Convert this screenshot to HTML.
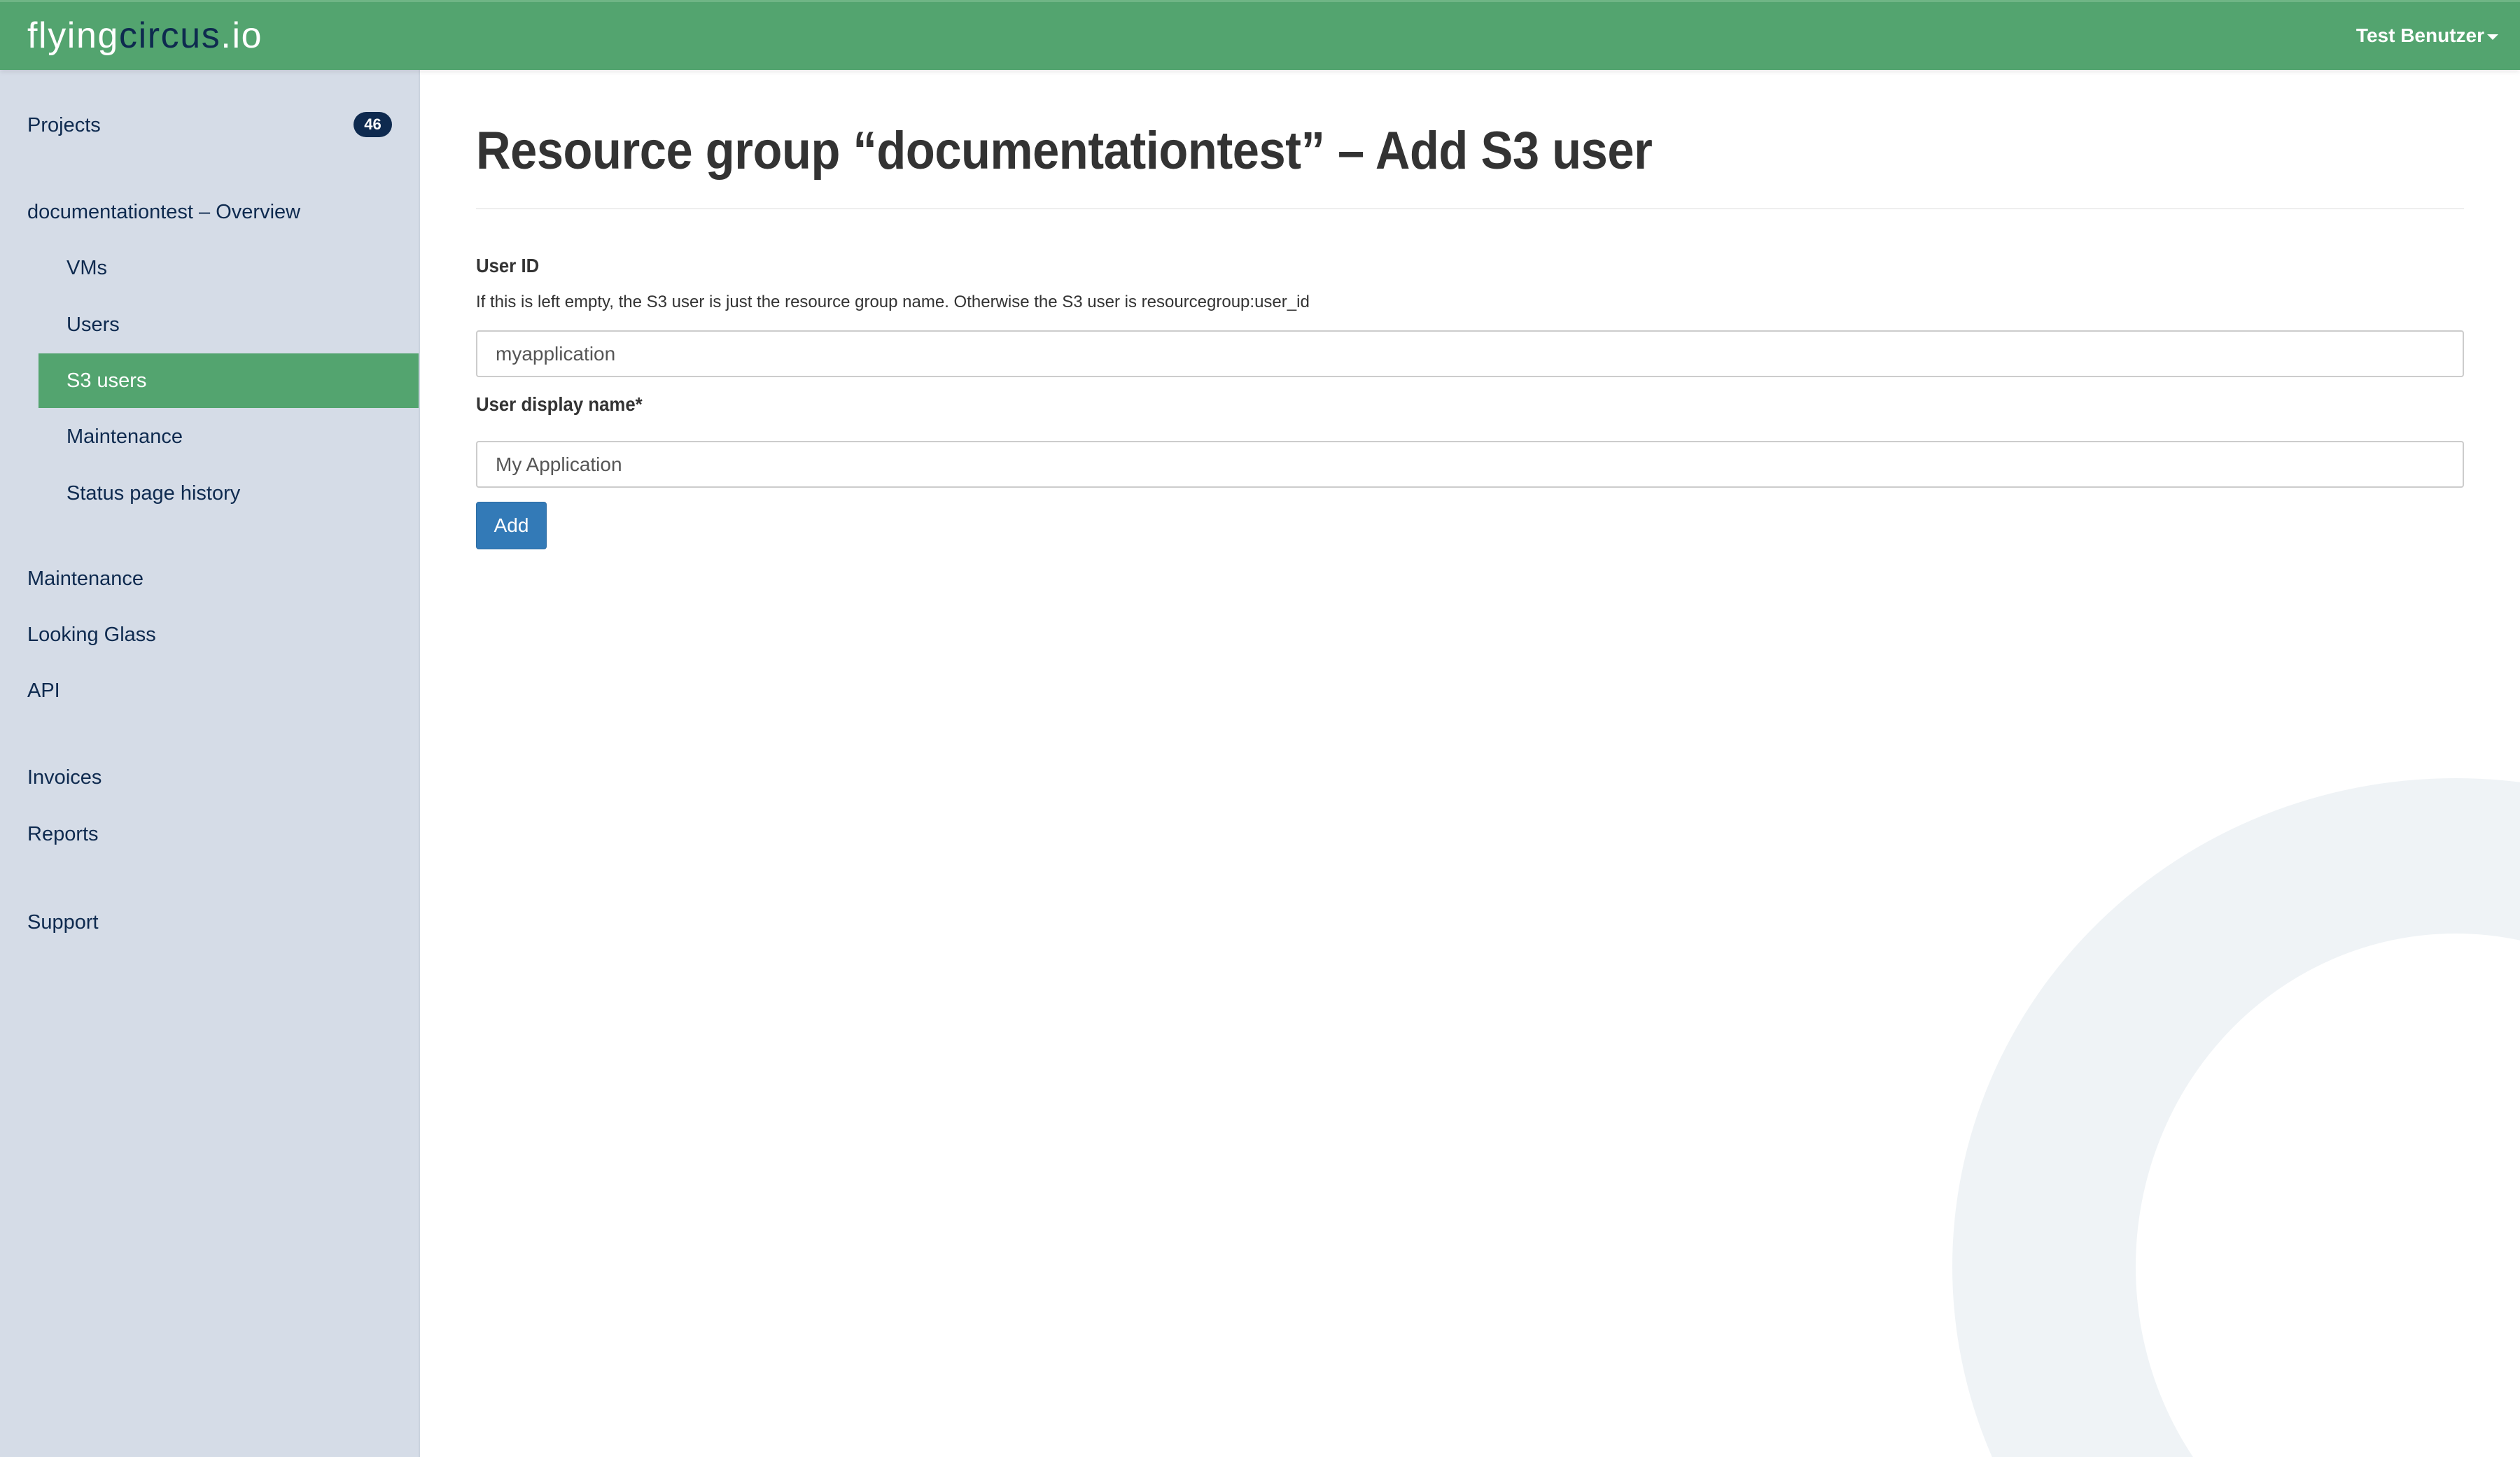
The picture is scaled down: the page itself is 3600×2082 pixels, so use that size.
<!DOCTYPE html>
<html><head><meta charset="utf-8">
<style>
*{box-sizing:border-box;margin:0;padding:0}
html,body{width:3600px;height:2082px;overflow:hidden;background:#fff;font-family:"Liberation Sans",sans-serif;position:relative}
.hdr{position:absolute;left:0;top:0;width:3600px;height:100px;background:#53a46f;border-top:3px solid #6fb585;box-shadow:0 3px 6px rgba(0,0,0,.08);z-index:3}
.logo{position:absolute;left:39px;top:18px;font-size:52px;color:#fff;letter-spacing:1.6px;line-height:60px}
.logo b{font-weight:normal;color:#0e2a4f}
.user{position:absolute;right:31px;top:30px;font-size:28px;font-weight:bold;color:#fff;line-height:36px}
.user span{display:inline-block;width:0;height:0;border-left:8px solid transparent;border-right:8px solid transparent;border-top:8px solid #fff;vertical-align:middle;margin-left:4px}
.side{position:absolute;left:0;top:100px;width:600px;height:1982px;background:#d5dce7;border-right:2px solid #cbd3de}
.nav{position:absolute;left:39px;font-size:29px;color:#0e2a4f;line-height:36px}
.sub{left:95px}
.act{position:absolute;left:55px;top:505px;width:543px;height:78px;background:#53a46f}
.badge{position:absolute;left:505px;top:160px;width:55px;height:36px;border-radius:18px;background:#0e2a4f;color:#fff;font-size:22px;font-weight:bold;text-align:center;line-height:36px}
.title{position:absolute;left:680px;top:168px;font-size:76px;font-weight:bold;color:#333;white-space:nowrap;line-height:96px;transform:scaleX(0.903);transform-origin:left top;letter-spacing:-0.5px}
.hr{position:absolute;left:680px;top:297px;width:2840px;height:2px;background:#eee}
.lbl{position:absolute;left:680px;font-size:28px;font-weight:bold;color:#333;line-height:34px;transform:scaleX(.92);transform-origin:left}
.help{position:absolute;left:680px;top:418px;font-size:24px;color:#333;line-height:28px;white-space:nowrap}
.inp{position:absolute;left:680px;width:2840px;height:67px;border:2px solid #ccc;border-radius:4px;background:#fff;font-size:28px;color:#555;padding-left:26px;line-height:63px}
.btn{position:absolute;left:680px;top:717px;width:101px;height:68px;background:#337ab7;border:1px solid #2e6da4;border-radius:4px;color:#fff;font-size:28px;line-height:66px;text-align:center}
svg{position:absolute;left:0;top:0;display:block}
</style></head><body>
<svg width="3600" height="2082"><path fill="#eff3f6" fill-rule="evenodd" d="M2789 1810a719 698 0 1 0 1438 0a719 698 0 1 0 -1438 0zM3051 1810a457 476 0 1 0 914 0a457 476 0 1 0 -914 0z"/></svg>
<div class="hdr"><div class="logo">flying<b>circus</b>.io</div><div class="user">Test Benutzer<span></span></div></div>
<div class="side"></div>
<div class="act"></div>
<div class="nav" style="top:161px">Projects</div>
<div class="badge">46</div>
<div class="nav" style="top:285px">documentationtest – Overview</div>
<div class="nav sub" style="top:365px">VMs</div>
<div class="nav sub" style="top:446px">Users</div>
<div class="nav sub" style="top:526px;color:#fff">S3 users</div>
<div class="nav sub" style="top:606px">Maintenance</div>
<div class="nav sub" style="top:687px">Status page history</div>
<div class="nav" style="top:809px">Maintenance</div>
<div class="nav" style="top:889px">Looking Glass</div>
<div class="nav" style="top:969px">API</div>
<div class="nav" style="top:1093px">Invoices</div>
<div class="nav" style="top:1174px">Reports</div>
<div class="nav" style="top:1300px">Support</div>
<div class="title">Resource group “documentationtest” – Add S3 user</div>
<div class="hr"></div>
<div class="lbl" style="top:363px">User ID</div>
<div class="help">If this is left empty, the S3 user is just the resource group name. Otherwise the S3 user is resourcegroup:user_id</div>
<div class="inp" style="top:472px">myapplication</div>
<div class="lbl" style="top:561px">User display name*</div>
<div class="inp" style="top:630px">My Application</div>
<div class="btn">Add</div>
</body></html>
